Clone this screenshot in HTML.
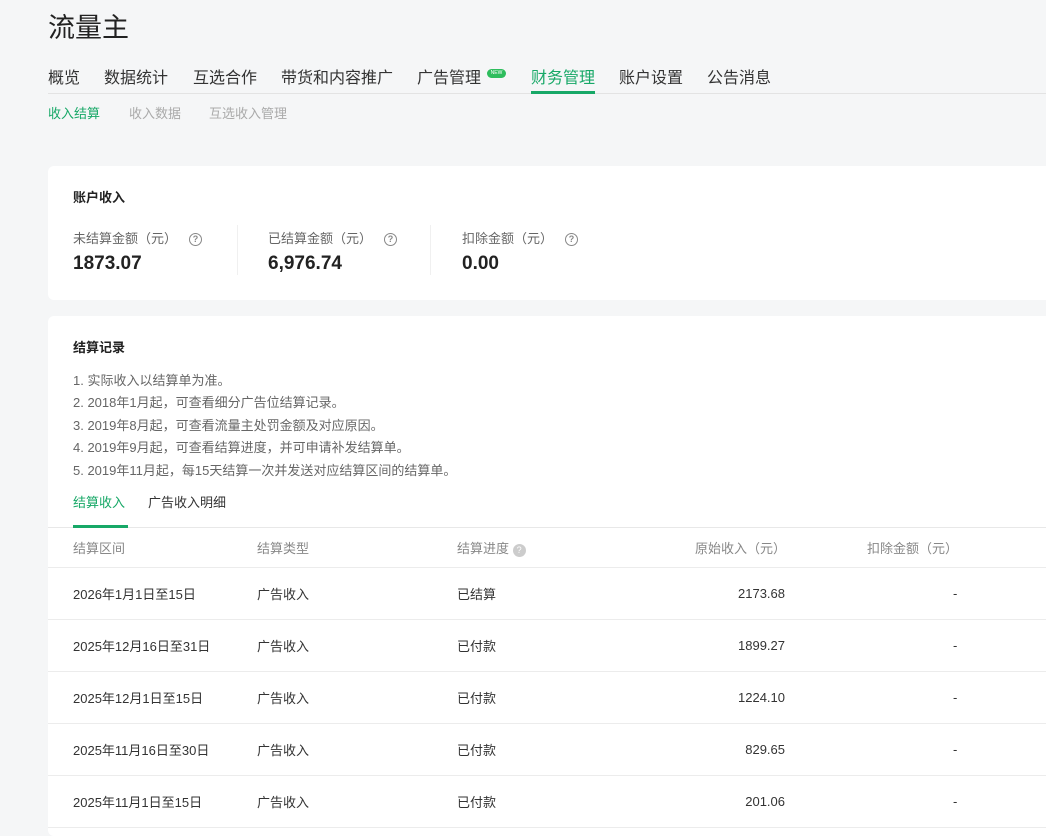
<!DOCTYPE html>
<html><head><meta charset="utf-8"><style>
*{margin:0;padding:0;box-sizing:border-box}
body{width:1046px;height:822px;overflow:hidden;background:#f5f6f7;font-family:"Liberation Sans","Noto Sans CJK SC",sans-serif;color:#222;position:relative}
.a{position:absolute;white-space:nowrap}
.title{left:48px;top:6px;font-size:27px;color:#222}
.nav{top:64px;font-size:16px;color:#333}
.sub{top:103px;font-size:13px;color:#aaa}
.card{position:absolute;left:48px;right:-10px;background:#fff;border-radius:6px}
.lbl{font-size:13px;color:#666;top:228px}
.val{font-size:19px;font-weight:bold;color:#222;top:253px}
.q{display:inline-block;width:13px;height:13px;border:1.3px solid #888;border-radius:50%;font-size:9px;line-height:11px;text-align:center;color:#888;vertical-align:1px;margin-left:12px;font-weight:bold}
.li{left:73px;font-size:13px;color:#666}
.row{position:absolute;left:48px;right:0;height:52px;border-bottom:1px solid #ececec}
.cell{position:absolute;font-size:13px;color:#333;top:16px}
.n{top:18px}
.hd{font-size:13px;color:#888}
</style></head><body>
<div class="a title">流量主</div>
<div class="a nav" style="left:48px">概览</div>
<div class="a nav" style="left:104px">数据统计</div>
<div class="a nav" style="left:193px">互选合作</div>
<div class="a nav" style="left:281px">带货和内容推广</div>
<div class="a nav" style="left:417px">广告管理</div>
<div class="a" style="left:487px;top:69px;width:19px;height:9px;background:#2ebd5d;border-radius:5px;font-size:5px;color:#fff;text-align:center;line-height:9px">NEW</div>
<div class="a nav" style="left:531px;color:#17a867">财务管理</div>
<div class="a nav" style="left:619px">账户设置</div>
<div class="a nav" style="left:707px">公告消息</div>
<div class="a" style="left:48px;right:0;top:93px;height:1px;background:#e3e3e3"></div>
<div class="a" style="left:531px;width:64px;top:91px;height:3px;background:#17a867"></div>
<div class="a sub" style="left:48px;color:#17a867">收入结算</div>
<div class="a sub" style="left:129px">收入数据</div>
<div class="a sub" style="left:209px">互选收入管理</div>

<div class="card" style="top:166px;height:134px"></div>
<div class="a" style="left:73px;top:187px;font-size:13px;font-weight:bold">账户收入</div>
<div class="a lbl" style="left:73px">未结算金额（元）<span class="q">?</span></div>
<div class="a val" style="left:73px">1873.07</div>
<div class="a" style="left:237px;top:225px;width:1px;height:50px;background:#f0f0f0"></div>
<div class="a lbl" style="left:268px">已结算金额（元）<span class="q">?</span></div>
<div class="a val" style="left:268px">6,976.74</div>
<div class="a" style="left:430px;top:225px;width:1px;height:50px;background:#f0f0f0"></div>
<div class="a lbl" style="left:462px">扣除金额（元）<span class="q">?</span></div>
<div class="a val" style="left:462px">0.00</div>

<div class="card" style="top:316px;height:520px"></div>
<div class="a" style="left:73px;top:337px;font-size:13px;font-weight:bold">结算记录</div>
<div class="a li" style="top:370px">1. 实际收入以结算单为准。</div>
<div class="a li" style="top:392px">2. 2018年1月起，可查看细分广告位结算记录。</div>
<div class="a li" style="top:415px">3. 2019年8月起，可查看流量主处罚金额及对应原因。</div>
<div class="a li" style="top:437px">4. 2019年9月起，可查看结算进度，并可申请补发结算单。</div>
<div class="a li" style="top:460px">5. 2019年11月起，每15天结算一次并发送对应结算区间的结算单。</div>
<div class="a" style="left:73px;top:492px;font-size:13px;color:#17a867">结算收入</div>
<div class="a" style="left:148px;top:492px;font-size:13px;color:#333">广告收入明细</div>
<div class="a" style="left:48px;right:0;top:527px;height:1px;background:#e8e8e8"></div>
<div class="a" style="left:73px;width:55px;top:525px;height:3px;background:#17a867"></div>

<div class="row" style="top:528px;height:40px">
<div class="cell hd" style="left:25px;top:10px">结算区间</div>
<div class="cell hd" style="left:209px;top:10px">结算类型</div>
<div class="cell hd" style="left:409px;top:10px">结算进度 <span style="display:inline-block;width:13px;height:13px;border-radius:50%;background:#ccc;color:#fff;font-size:9px;text-align:center;line-height:13px;vertical-align:0">?</span></div>
<div class="cell hd" style="left:647px;top:10px">原始收入（元）</div>
<div class="cell hd" style="left:819px;top:10px">扣除金额（元）</div>
</div>

<div class="row" style="top:568px"><div class="cell" style="left:25px">2026年1月1日至15日</div><div class="cell" style="left:209px">广告收入</div><div class="cell" style="left:409px">已结算</div><div class="cell n" style="right:261px">2173.68</div><div class="cell n" style="left:905px">-</div></div>
<div class="row" style="top:620px"><div class="cell" style="left:25px">2025年12月16日至31日</div><div class="cell" style="left:209px">广告收入</div><div class="cell" style="left:409px">已付款</div><div class="cell n" style="right:261px">1899.27</div><div class="cell n" style="left:905px">-</div></div>
<div class="row" style="top:672px"><div class="cell" style="left:25px">2025年12月1日至15日</div><div class="cell" style="left:209px">广告收入</div><div class="cell" style="left:409px">已付款</div><div class="cell n" style="right:261px">1224.10</div><div class="cell n" style="left:905px">-</div></div>
<div class="row" style="top:724px"><div class="cell" style="left:25px">2025年11月16日至30日</div><div class="cell" style="left:209px">广告收入</div><div class="cell" style="left:409px">已付款</div><div class="cell n" style="right:261px">829.65</div><div class="cell n" style="left:905px">-</div></div>
<div class="row" style="top:776px"><div class="cell" style="left:25px">2025年11月1日至15日</div><div class="cell" style="left:209px">广告收入</div><div class="cell" style="left:409px">已付款</div><div class="cell n" style="right:261px">201.06</div><div class="cell n" style="left:905px">-</div></div>
</body></html>
